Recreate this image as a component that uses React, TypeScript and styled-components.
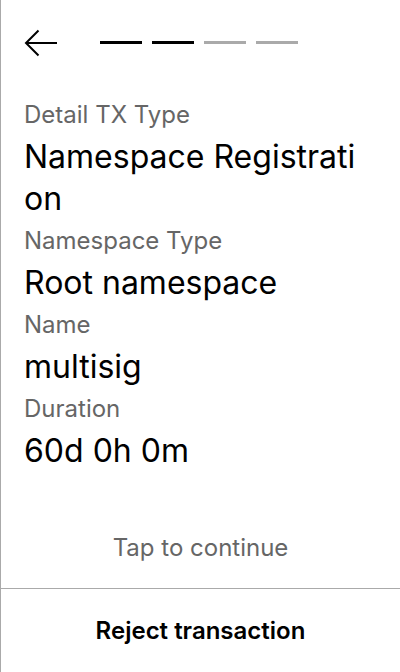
import styled, { createGlobalStyle } from "styled-components";

const GlobalStyle = createGlobalStyle`
  html, body {
    margin: 0;
    padding: 0;
    background: #fff;
  }
  body {
    font-family: Inter, "Noto Sans", sans-serif;
  }
`;

const STEPS = [true, true, false, false];

const FIELDS = [
  { label: "Detail TX Type", value: "Namespace Registration" },
  { label: "Namespace Type", value: "Root namespace" },
  { label: "Name", value: "multisig" },
  { label: "Duration", value: "60d 0h 0m" },
];

const BackArrow = () => (
  <svg width="33" height="28" viewBox="0 0 33 28" fill="none">
    <path d="M2 14H33" stroke="#000" strokeWidth="2" />
    <path d="M14.5 1.5L2 14L14.5 26.5" stroke="#000" strokeWidth="2" />
  </svg>
);

export default function App() {
  return (
    <>
      <GlobalStyle />
      <Screen>
        <Header>
          <BackButton aria-label="Back">
            <BackArrow />
          </BackButton>
          <Steps>
            {STEPS.map((done, i) => (
              <Step key={i} $done={done} />
            ))}
          </Steps>
        </Header>

        <Details>
          {FIELDS.map((f) => (
            <Field key={f.label}>
              <Label>{f.label}</Label>
              <Value>{f.value}</Value>
            </Field>
          ))}
        </Details>

        <TapArea>Tap to continue</TapArea>

        <Footer>
          <RejectButton>Reject transaction</RejectButton>
        </Footer>
      </Screen>
    </>
  );
}

const Screen = styled.div`
  display: flex;
  flex-direction: column;
  height: 100vh;
  box-sizing: border-box;
  border-left: 1px solid #aaa;
  color: #000;
`;

const Header = styled.div`
  display: flex;
  align-items: center;
  gap: 43px;
  height: 84px;
  padding-left: 23px;
`;

const BackButton = styled.div`
  display: flex;
  align-items: center;
  margin-top: 2px;
`;

const Steps = styled.div`
  display: flex;
  gap: 10px;
`;

const Step = styled.div<{ $done: boolean }>`
  width: 42px;
  height: 3px;
  background: ${(p) => (p.$done ? "#000" : "#aaa")};
`;

const Details = styled.div`
  flex: 1;
  padding: 10px 38px 0 23px;
`;

const Field = styled.div`
  display: flex;
  flex-direction: column;
`;

const Label = styled.div`
  font-size: 24px;
  line-height: 42px;
  color: #666;
`;

const Value = styled.div`
  font-size: 32px;
  line-height: 42px;
  color: #000;
  word-break: break-all;
`;

const TapArea = styled.div`
  height: 78px;
  padding-bottom: 2px;
  display: flex;
  align-items: center;
  justify-content: center;
  font-size: 24px;
  color: #666;
`;

const Footer = styled.div`
  border-top: 1px solid #aaa;
  height: 83px;
  display: flex;
  align-items: center;
  justify-content: center;
`;

const RejectButton = styled.div`
  font-size: 24px;
  font-weight: 600;
  color: #000;
`;
